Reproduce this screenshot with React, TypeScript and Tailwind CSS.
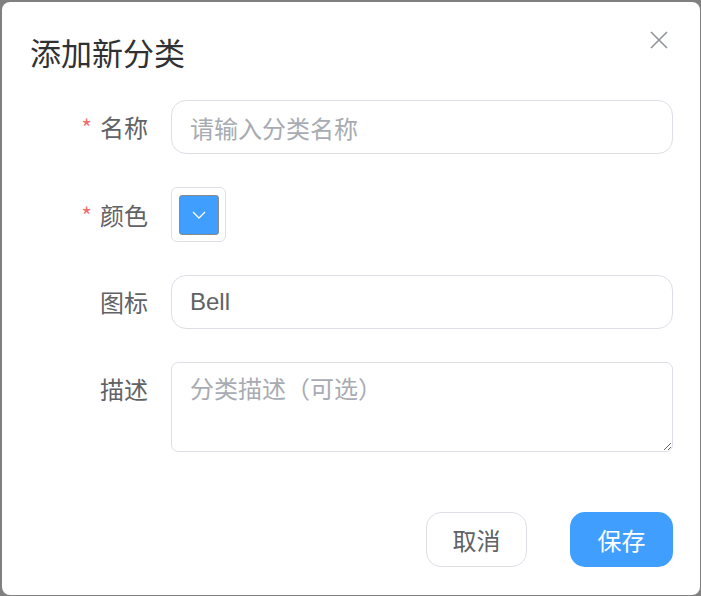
import React from "react";

const font = { fontFamily: '"Noto Sans CJK SC", "Noto Sans", sans-serif' };

function Label({ text, required, top }: { text: string; required?: boolean; top?: boolean }) {
  return (
    <div
      className={`w-[118px] shrink-0 flex justify-end ${top ? "items-start" : "items-center"} text-[24px] text-[#606266] leading-[54px]`}
    >
      {required && <span className="text-[#f56c6c] mr-[8px] text-[23px]">*</span>}
      <span>{text}</span>
    </div>
  );
}

export default function App() {
  return (
    <div className="w-[701px] h-[596px] bg-[#808080] overflow-hidden relative" style={font}>
      <div className="absolute left-[2px] top-[2px] w-[698px] h-[593px] bg-white rounded-[8px] flex flex-col">
        <div className="relative pt-[30px] pl-[28px] h-[70px]">
          <div className="text-[31px] leading-[40px] text-[#303133]">添加新分类</div>
          <svg
            className="absolute left-[647px] top-[28px]"
            width="20"
            height="20"
            viewBox="0 0 20 20"
          >
            <path d="M2 2 L18 18 M18 2 L2 18" stroke="#909399" strokeWidth="1.6" fill="none" />
          </svg>
        </div>
        <div className="flex flex-col gap-[33px] pl-[28px] pr-[27px] mt-[28px]">
          <div className="flex gap-[23px]">
            <Label text="名称" required />
            <input
              className="flex-1 h-[54px] border-[1.5px] border-[#dcdfe6] rounded-[15px] px-[18px] text-[24px] text-[#606266] placeholder:text-[#a8abb2] outline-none"
              placeholder="请输入分类名称"
              style={font}
            />
          </div>
          <div className="flex gap-[23px]">
            <Label text="颜色" required />
            <div className="w-[55px] h-[55px] border-[1.5px] border-[#dcdfe6] rounded-[6px] flex items-center justify-center">
              <div className="w-[40px] h-[40px] bg-[#409eff] border border-[#8a8a8a] rounded-[3px] flex items-center justify-center">
                <svg width="14" height="8" viewBox="0 0 14 8">
                  <path d="M1 1 L7 7 L13 1" stroke="white" strokeWidth="1.3" fill="none" />
                </svg>
              </div>
            </div>
          </div>
          <div className="flex gap-[23px]">
            <Label text="图标" />
            <input
              className="flex-1 h-[54px] border-[1.5px] border-[#dcdfe6] rounded-[15px] px-[18px] text-[24px] text-[#606266] outline-none"
              defaultValue="Bell"
              style={{ fontFamily: '"Liberation Sans", "Noto Sans CJK SC", sans-serif' }}
            />
          </div>
          <div className="flex gap-[23px]">
            <Label text="描述" top />
            <textarea
              className="flex-1 h-[90px] border-[1.5px] border-[#dcdfe6] rounded-[7px] px-[18px] py-[8px] text-[24px] leading-[34px] text-[#606266] placeholder:text-[#a8abb2] outline-none resize-y"
              placeholder="分类描述（可选）"
              style={font}
            />
          </div>
        </div>
        <div className="flex justify-end gap-[43px] pr-[27px] mt-[60px]">
          <button className="w-[101px] h-[55px] border-[1.5px] border-[#dcdfe6] rounded-[15px] bg-white text-[24px] text-[#606266]">
            取消
          </button>
          <button className="w-[103px] h-[55px] rounded-[15px] bg-[#409eff] text-[24px] text-white">
            保存
          </button>
        </div>
      </div>
    </div>
  );
}
